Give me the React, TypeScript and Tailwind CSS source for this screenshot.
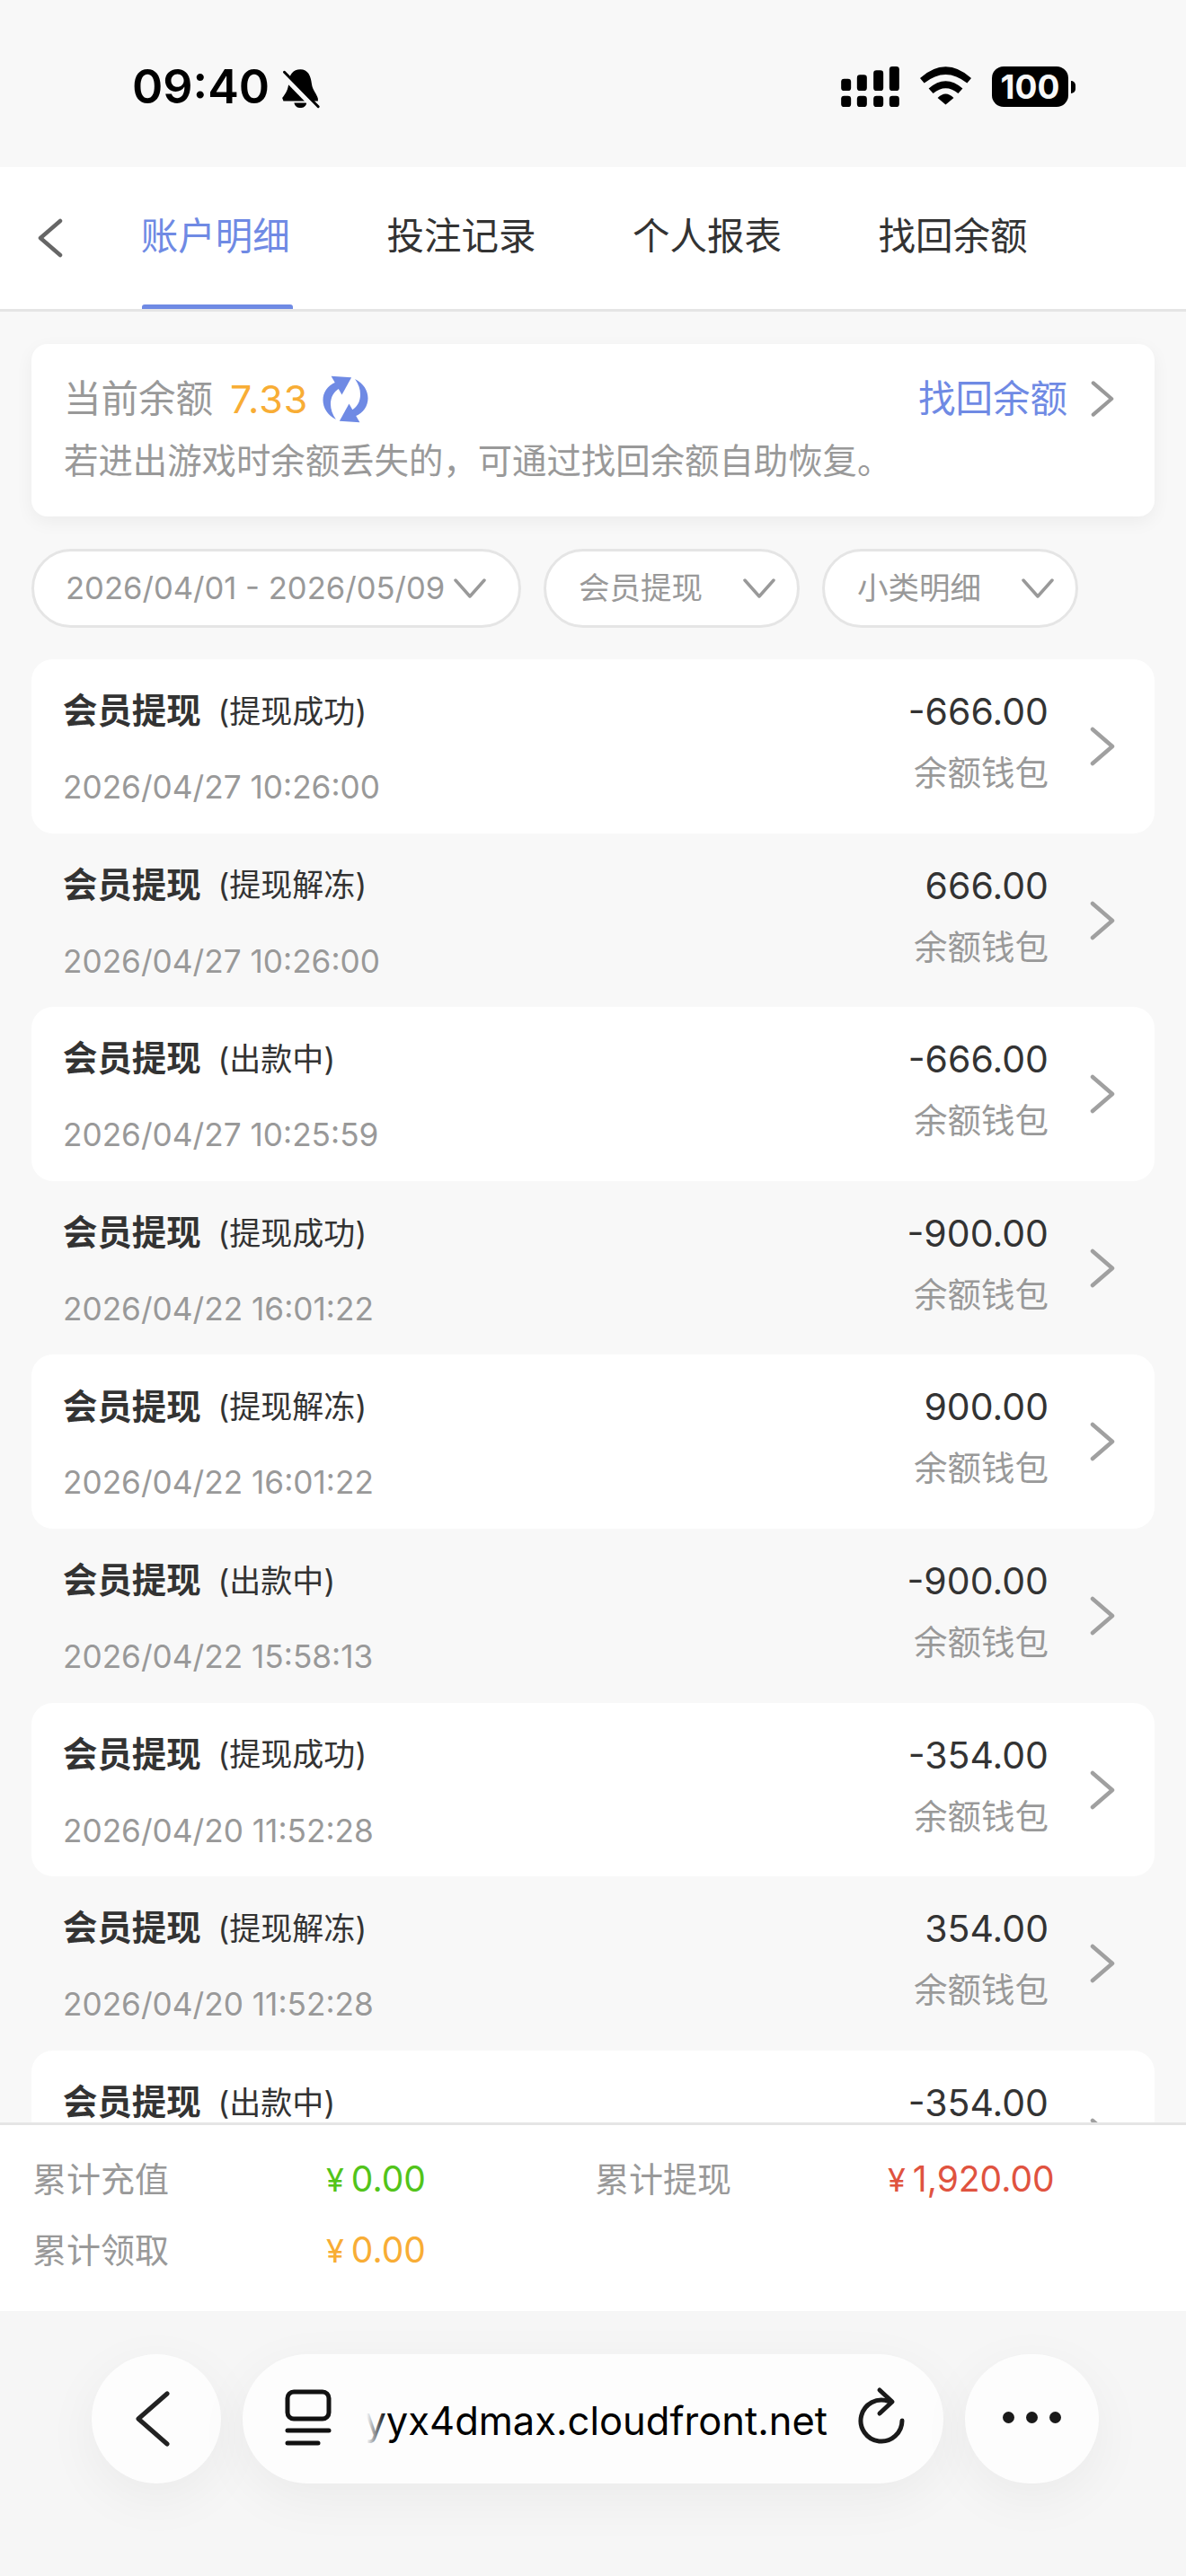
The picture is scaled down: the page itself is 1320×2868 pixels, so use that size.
const font = "font-['Inter','Noto_Sans_CJK_SC',sans-serif]";

interface Row {
  status: string;
  date: string;
  amount: string;
}

const rows: Row[] = [
  { status: "提现成功", date: "2026/04/27 10:26:00", amount: "-666.00" },
  { status: "提现解冻", date: "2026/04/27 10:26:00", amount: "666.00" },
  { status: "出款中", date: "2026/04/27 10:25:59", amount: "-666.00" },
  { status: "提现成功", date: "2026/04/22 16:01:22", amount: "-900.00" },
  { status: "提现解冻", date: "2026/04/22 16:01:22", amount: "900.00" },
  { status: "出款中", date: "2026/04/22 15:58:13", amount: "-900.00" },
  { status: "提现成功", date: "2026/04/20 11:52:28", amount: "-354.00" },
  { status: "提现解冻", date: "2026/04/20 11:52:28", amount: "354.00" },
  { status: "出款中", date: "2026/04/20 11:52:28", amount: "-354.00" },
];

const tabs = ["账户明细", "投注记录", "个人报表", "找回余额"];

function Chevron({ className }: { className?: string }) {
  return (
    <svg viewBox="0 0 28 44" className={className} fill="none" stroke="currentColor" strokeWidth="4.5" strokeLinecap="round" strokeLinejoin="round">
      <path d="M3 3 L25 22 L3 41" />
    </svg>
  );
}

function DownArrow() {
  return (
    <svg viewBox="0 0 36 22" className="w-[36px] h-[22px] text-[#999999] shrink-0" fill="none" stroke="currentColor" strokeWidth="3.5" strokeLinecap="round" strokeLinejoin="round">
      <path d="M2 2 L18 20 L34 2" />
    </svg>
  );
}

function StatusBar() {
  return (
    <div className="h-[186px] shrink-0 flex justify-between pt-[74px] pl-[147px] pr-[123px]">
      <div className="flex items-start gap-[12px]">
        <span className="text-[52px] leading-[46px] font-semibold text-black">09:40</span>
        <svg viewBox="630 100 135 145" className="w-[45px] h-[48px] mt-[1px]">
          <path d="M697 107 C722 107 732 128 735 155 C738 178 752 188 756 205 L756 213 L640 213 L636 203 C648 188 656 175 658 150 C660 125 672 107 697 107 Z" fill="#000" />
          <path d="M676 219 L718 219 C714 242 680 242 676 219 Z" fill="#000" />
          <path d="M630 118 L745 236" stroke="#f8f8f8" strokeWidth="18" />
          <path d="M643 116 L757 232" stroke="#000" strokeWidth="9" strokeLinecap="round" />
        </svg>
      </div>
      <div className="flex items-start gap-[23px]">
        <svg viewBox="112 102 194 135" className="w-[65px] h-[45px]">
          <rect x="112" y="143" width="33" height="40" rx="10" />
          <rect x="165" y="130" width="33" height="53" rx="10" />
          <rect x="220" y="115" width="33" height="68" rx="10" />
          <rect x="273" y="102" width="33" height="81" rx="10" />
          <rect x="112" y="200" width="33" height="37" rx="10" />
          <rect x="165" y="200" width="33" height="37" rx="10" />
          <rect x="220" y="200" width="33" height="37" rx="10" />
          <rect x="273" y="200" width="33" height="37" rx="10" />
        </svg>
        <svg viewBox="375 105 172 128" className="w-[57px] h-[43px]">
          <path d="M375 143 Q461 67 547 143 L533 160 Q461 102 389 160 Z" />
          <path d="M404 178 Q461 128 518 178 L503 195 Q461 160 419 195 Z" />
          <path d="M434 210 Q461 182 488 210 L461 232 Z" />
        </svg>
        <div className="flex items-center gap-[3px]">
          <div className="w-[85px] h-[45px] rounded-[13px] bg-black text-[#f8f8f8] text-[37px] leading-[45px] font-bold text-center">100</div>
          <div className="w-[5px] h-[14px] rounded-r-[5px] bg-black" />
        </div>
      </div>
    </div>
  );
}

function TabBar() {
  return (
    <div className="h-[161px] shrink-0 bg-white border-b-[3px] border-[#e5e5e5] relative flex items-stretch pl-[103px]">
      <Chevron className="absolute left-[42px] top-[57px] w-[28px] h-[44px] -scale-x-100 text-[#666666]" />
      {tabs.map((t, i) => (
        <div key={t} className="w-[273.6px] flex justify-center relative">
          <span className={`text-[41.5px] leading-[50px] mt-[52px] ${i === 0 ? "text-[#6f8ae4]" : "text-[#333333]"}`}>{t}</span>
          {i === 0 && <div className="absolute bottom-0 left-[55px] w-[168px] h-[5px] rounded-t-[3px] bg-[#6f8ae4]" />}
        </div>
      ))}
    </div>
  );
}

function BalanceCard() {
  return (
    <div className="h-[192px] bg-white rounded-[18px] shadow-[0_6px_20px_rgba(0,0,0,0.05)] px-[36px] pt-[36px]">
      <div className="h-[50px] flex items-center">
        <span className="text-[41.5px] leading-[50px] text-[#999999]">当前余额</span>
        <span className="text-[43px] leading-[50px] tracking-[1px] text-[#f8ad35] ml-[19px]">7.33</span>
        <svg viewBox="60 50 160 170" className="w-[53px] h-[57px] ml-[15px]">
          <g fill="#6f8ae4">
            <path d="M108 203 C50 175 50 100 108 78 L122 97 C85 115 80 165 108 203 Z" />
            <path d="M92 57 L160 62 L128 120 Z" />
            <g transform="rotate(180 140 135)">
              <path d="M108 203 C50 175 50 100 108 78 L122 97 C85 115 80 165 108 203 Z" />
              <path d="M92 57 L160 62 L128 120 Z" />
            </g>
          </g>
        </svg>
        <span className="ml-auto text-[41.5px] leading-[50px] text-[#6f8ae4]">找回余额</span>
        <Chevron className="w-[26px] h-[42px] text-[#999999] ml-[26px] mr-[9px]" />
      </div>
      <div className="text-[38.4px] leading-[50px] text-[#999999] mt-[19px] whitespace-nowrap">若进出游戏时余额丢失的，可通过找回余额自助恢复。</div>
    </div>
  );
}

function Filters() {
  return (
    <div className="flex gap-[25px] mt-[36px] text-[#999999] text-[34.5px]">
      <div className="w-[545px] h-[88px] bg-white rounded-full border-[3px] border-[#e5e5e5] flex items-center justify-between pl-[35px] pr-[36px] whitespace-nowrap">
        <span className="text-[34.6px]">2026/04/01 - 2026/05/09</span>
        <DownArrow />
      </div>
      <div className="w-[285px] h-[88px] bg-white rounded-full border-[3px] border-[#e5e5e5] flex items-center justify-between pl-[36px] pr-[24px]">
        <span>会员提现</span>
        <DownArrow />
      </div>
      <div className="w-[285px] h-[88px] bg-white rounded-full border-[3px] border-[#e5e5e5] flex items-center justify-between pl-[36px] pr-[24px]">
        <span>小类明细</span>
        <DownArrow />
      </div>
    </div>
  );
}

function RecordRow({ row, odd }: { row: Row; odd: boolean }) {
  return (
    <div className={`h-[193.6px] shrink-0 rounded-[24px] flex pt-[33px] pl-[35px] pr-[44px] ${odd ? "bg-white" : ""}`}>
      <div className="flex-1">
        <div className="h-[50px] flex items-center text-[#333333]">
          <span className="text-[38.4px] font-bold">会员提现</span>
          <span className="text-[35px] ml-[19px]">({row.status})</span>
        </div>
        <div className="text-[35.2px] leading-[50px] text-[#999999] mt-[34px]">{row.date}</div>
      </div>
      <div className="text-right">
        <div className="text-[41px] leading-[50px] text-[#333333]">{row.amount}</div>
        <div className="text-[37.5px] leading-[50px] text-[#999999] mt-[19px]">余额钱包</div>
      </div>
      <Chevron className="w-[28px] h-[44px] text-[#a0a0a0] ml-[46px] mt-[42px]" />
    </div>
  );
}

function Money({ value, className }: { value: string; className: string }) {
  return (
    <span className={className}>
      <span className="text-[36px] mr-[8px]">¥</span>
      {value}
    </span>
  );
}

function Totals() {
  return (
    <div className="h-[210px] shrink-0 bg-white border-t-[3px] border-[#e5e5e5] pl-[36px] pt-[35px] grid grid-cols-[327px_299px_326px_1fr] auto-rows-[79px] text-[38px] leading-[50px]">
      <span className="text-[#999999]">累计充值</span>
      <Money value="0.00" className="text-[#52c41a] text-[39px]" />
      <span className="text-[#999999]">累计提现</span>
      <Money value="1,920.00" className="text-[#e0533f] text-[39px]" />
      <span className="text-[#999999]">累计领取</span>
      <Money value="0.00" className="text-[#f8ad35] text-[39px]" />
    </div>
  );
}

function BrowserBar() {
  return (
    <div className="flex-1 bg-[#f6f6f6] flex items-start pl-[102px] gap-[24px] pt-[48px]">
      <div className="w-[144px] h-[144px] rounded-full bg-[#fdfdfd] shadow-[0_16px_60px_rgba(0,0,0,0.05)] flex items-center justify-center">
        <svg viewBox="0 0 38 62" className="w-[38px] h-[62px] mr-[8px]" fill="none" stroke="#222222" strokeWidth="5" strokeLinecap="round" strokeLinejoin="round">
          <path d="M35 3 L3 31 L35 59" />
        </svg>
      </div>
      <div className="w-[780px] h-[144px] rounded-full bg-[#fdfdfd] shadow-[0_16px_60px_rgba(0,0,0,0.05)] flex items-center pl-[47px]">
        <svg viewBox="0 0 52 66" className="w-[52px] h-[66px] shrink-0" fill="none" stroke="#111111" strokeWidth="5" strokeLinecap="round">
          <rect x="3" y="3" width="46" height="30" rx="7" />
          <path d="M3 46 H49" />
          <path d="M3 60 H37" />
        </svg>
        <div className="relative w-[513px] ml-[39px] mt-[4px] overflow-hidden flex justify-end">
          <span className="text-[43.5px] leading-[60px] text-black whitespace-nowrap">yyx4dmax.cloudfront.net</span>
          <div className="absolute left-0 top-0 h-full w-[22px] bg-gradient-to-r from-[#fdfdfd] to-transparent" />
        </div>
        <svg viewBox="0 0 54 64" className="w-[54px] h-[64px] ml-[34px] mb-[8px] shrink-0" fill="none" stroke="#1a1a1a" strokeWidth="5" strokeLinecap="round" strokeLinejoin="round">
          <path d="M49 38 A23 23 0 1 1 34 16.5" />
          <path d="M24 4 L38 17 L24 30" />
        </svg>
      </div>
      <div className="w-[149px] h-[144px] rounded-full bg-[#fdfdfd] shadow-[0_16px_60px_rgba(0,0,0,0.05)] flex items-center justify-center gap-[13px] pb-[4px]">
        <div className="w-[13px] h-[13px] rounded-full bg-[#1a1a1a]" />
        <div className="w-[13px] h-[13px] rounded-full bg-[#1a1a1a]" />
        <div className="w-[13px] h-[13px] rounded-full bg-[#1a1a1a]" />
      </div>
    </div>
  );
}

export default function App() {
  return (
    <div className={`h-[2868px] w-[1320px] bg-[#f8f8f8] flex flex-col overflow-hidden ${font}`}>
      <StatusBar />
      <TabBar />
      <div className="h-[2016px] shrink-0 overflow-hidden px-[35px] pt-[36px]">
        <BalanceCard />
        <Filters />
        <div className="flex flex-col mt-[35px]">
          {rows.map((row, i) => (
            <RecordRow key={i} row={row} odd={i % 2 === 0} />
          ))}
        </div>
      </div>
      <Totals />
      <BrowserBar />
    </div>
  );
}
